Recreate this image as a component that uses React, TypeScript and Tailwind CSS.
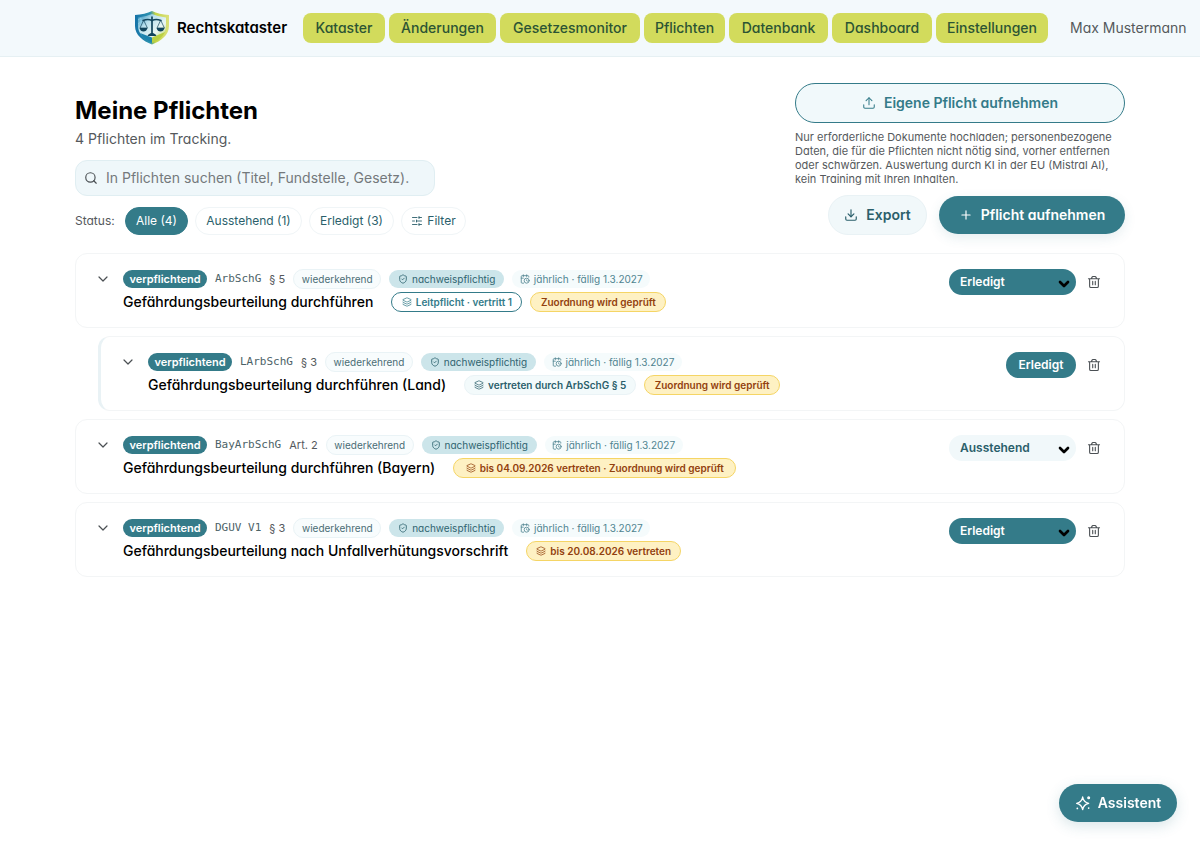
import type { ReactNode } from "react";
import clsx from "clsx";
import {
  CalendarClock,
  ChevronDown,
  Download,
  Layers,
  Plus,
  Search,
  ShieldCheck,
  Upload,
} from "lucide-react";

type Duty = {
  id: string;
  law: string;
  section: string;
  title: string;
  status: "Erledigt" | "Ausstehend";
  child?: boolean;
  tags: ReactNode;
};

const navItems = [
  { label: "Kataster", width: "w-[82px]" },
  { label: "Änderungen", width: "w-[107px]" },
  { label: "Gesetzesmonitor", width: "w-[140px]" },
  { label: "Pflichten", width: "w-[81px]" },
  { label: "Datenbank", width: "w-[99px]" },
  { label: "Dashboard", width: "w-[100px]" },
  { label: "Einstellungen", width: "w-[112px]" },
];

function Logo() {
  return (
    <svg viewBox="0 0 36 36" className="size-9 shrink-0" aria-hidden="true">
      <defs>
        <linearGradient id="rim" x1="0" y1="0" x2="1" y2="0">
          <stop offset="0" stopColor="#1573a8" />
          <stop offset=".45" stopColor="#2d93ae" />
          <stop offset=".6" stopColor="#c3d548" />
          <stop offset="1" stopColor="#dbe17c" />
        </linearGradient>
        <linearGradient id="field" x1="0" y1="0" x2="1" y2="1">
          <stop offset="0" stopColor="#2488b5" />
          <stop offset=".32" stopColor="#b9e1ee" />
          <stop offset=".65" stopColor="#eaf6f3" />
          <stop offset="1" stopColor="#b4cf4a" />
        </linearGradient>
      </defs>
      <path d="M18 1 Q25 4.500 35 5 V16 C35 25 27 31 18 34.500 C9 31 1 25 1 16 V5 Q11 4.500 18 1Z" fill="url(#rim)" />
      <path d="M18 4 Q25 7 32 7.500 V16 C32 23.500 26 28.500 18 31.500 C10 28.500 4 23.500 4 16 V7.500 Q11 7 18 4Z" fill="url(#field)" />
      <path d="M6 23 C9 28 13 30.500 18 33 V27.500Z" fill="#1c83ad" />
      <path d="M18 27.500 L31 22 C28 28 23 31 18 33Z" fill="#b9d043" />
      <path d="M4 10 l3-2 M4 14 l4-3 M7 8 v6" stroke="#8fd0ea" strokeWidth=".8" />
      <g fill="none" stroke="#12455c" strokeLinecap="round" strokeLinejoin="round">
        <path d="M18 7v17" strokeWidth="1.700" />
        <path d="M9 10.500 Q14 8.500 18 10.500 Q22 8.500 27 10.500" strokeWidth="1.400" />
        <path d="M9.500 10.500 6 18h7z M26.500 10.500 23 18h7z" strokeWidth=".7" />
      </g>
      <path d="M5.500 18h8q-1 3.500-4 3.500t-4-3.500z M22.500 18h8q-1 3.500-4 3.500t-4-3.500z M13.500 26q.5-2 3.500-3h2q3 1 3.500 3z" fill="#12455c" />
    </svg>
  );
}

function TrashIcon() {
  return (
    <svg viewBox="0 0 24 24" className="size-[14px]" fill="none" stroke="currentColor" strokeWidth="1.900" strokeLinecap="round" strokeLinejoin="round" aria-hidden="true">
      <path d="M2.500 6.500h19M4.500 6.500v12.800a2.200 2.200 0 0 0 2.200 2.200h10.600a2.200 2.200 0 0 0 2.200-2.200V6.500M7.500 6.500l1-2.700A2 2 0 0 1 10.300 2.500h3.400a2 2 0 0 1 1.800 1.300l1 2.700M9.800 11v5.500M14.200 11v5.500" />
    </svg>
  );
}

function SlidersIcon() {
  return (
    <svg viewBox="0 0 24 24" className="size-3" fill="none" stroke="currentColor" strokeWidth="1.800" strokeLinecap="round" aria-hidden="true">
      <path d="M3 5h9M16 5h5M16 3v4M3 12h4M11 12h10M11 10v4M3 19h9M16 19h5M16 17v4" />
    </svg>
  );
}

function SparkIcon() {
  return (
    <svg viewBox="0 0 24 24" className="size-4" fill="none" stroke="currentColor" strokeWidth="2" strokeLinecap="round" strokeLinejoin="round" aria-hidden="true">
      <path d="M11.500 3c1 6 3.300 8.300 9 9.500-5.700 1.200-8 3.500-9 9.500-1-6-3.300-8.300-9-9.500 5.700-1.200 8-3.500 9-9.500z" />
      <circle cx="20.500" cy="4" r="1.300" />
      <path d="M20.500 19.500v.1M3.500 20v.1" strokeWidth="2.600" />
    </svg>
  );
}

const chip = "flex items-center justify-center gap-1 rounded-full whitespace-nowrap";

function AmberTag({ width, icon, children }: { width: string; icon?: boolean; children: ReactNode }) {
  return (
    <span className={clsx(chip, width, "h-5 border border-[#f5d565] bg-[#fef1c3] text-[10px] font-semibold text-[#92400e]")}>
      {icon && <Layers className="size-[10px]" strokeWidth={1.8} />}
      {children}
    </span>
  );
}

const duties: Duty[] = [
  {
    id: "arbschg",
    law: "ArbSchG",
    section: "§ 5",
    title: "Gefährdungsbeurteilung durchführen",
    status: "Erledigt",
    tags: (
      <>
        <span className={clsx(chip, "h-5 w-[131px] border border-[#347b89] bg-white text-[10px] font-semibold text-[#347b89]")}>
          <Layers className="size-[10px]" strokeWidth={1.8} />
          Leitpflicht · vertritt 1
        </span>
        <AmberTag width="w-[136px]">Zuordnung wird geprüft</AmberTag>
      </>
    ),
  },
  {
    id: "larbschg",
    law: "LArbSchG",
    section: "§ 3",
    title: "Gefährdungsbeurteilung durchführen (Land)",
    status: "Erledigt",
    child: true,
    tags: (
      <>
        <span className={clsx(chip, "h-5 w-[172px] border border-[#eaf3f6] bg-[#f3fafb] text-[10px] font-semibold text-[#2b5f6b]")}>
          <Layers className="size-[10px]" strokeWidth={1.8} />
          vertreten durch ArbSchG § 5
        </span>
        <AmberTag width="w-[136px]">Zuordnung wird geprüft</AmberTag>
      </>
    ),
  },
  {
    id: "bayarbschg",
    law: "BayArbSchG",
    section: "Art. 2",
    title: "Gefährdungsbeurteilung durchführen (Bayern)",
    status: "Ausstehend",
    tags: (
      <AmberTag width="w-[283px]" icon>
        bis 04.09.2026 vertreten · Zuordnung wird geprüft
      </AmberTag>
    ),
  },
  {
    id: "dguv",
    law: "DGUV V1",
    section: "§ 3",
    title: "Gefährdungsbeurteilung nach Unfallverhütungsvorschrift",
    status: "Erledigt",
    tags: (
      <AmberTag width="w-[155px]" icon>
        bis 20.08.2026 vertreten
      </AmberTag>
    ),
  },
];

function DutyCard({ duty }: { duty: Duty }) {
  return (
    <li
      className={clsx(
        "flex items-start gap-[9px] rounded-xl border border-[#f3f5f6] bg-white px-4 py-[15px]",
        duty.child && "ml-[23px] border-l-[3px] border-l-[#e9f2f5]",
      )}
    >
      <button type="button" aria-label="Details anzeigen" className="flex h-5 w-[22px] shrink-0 items-center justify-center text-[#4b5054]">
        <ChevronDown className="size-4" strokeWidth={1.8} />
      </button>
      <div className="flex min-w-0 flex-1 flex-col gap-[3px]">
        <div className="flex h-5 items-center gap-2 text-[10px]">
          <span className={clsx(chip, "h-[18px] w-[84px] bg-[#347b89] text-[11px] font-semibold text-white")}>verpflichtend</span>
          <span className="font-['DejaVu_Sans_Mono',monospace] text-[11px] text-[#4c6267]">{duty.law}</span>
          <span className="text-[11px] text-[#55595c]">{duty.section}</span>
          <span className={clsx(chip, "h-5 w-[88px] border border-[#eaf3f6] bg-[#f8fcfd] text-[#4a6d75]")}>wiederkehrend</span>
          <span className={clsx(chip, "h-[18px] w-[115px] bg-[#cce5ea] text-[#2f6470]")}>
            <ShieldCheck className="size-[10px]" strokeWidth={2} />
            nachweispflichtig
          </span>
          <span className={clsx(chip, "h-[18px] w-[138px] bg-[#f5fbfc] text-[#4f8490]")}>
            <CalendarClock className="size-[10px]" strokeWidth={2} />
            jährlich · fällig 1.3.2027
          </span>
        </div>
        <div className="flex h-5 items-center gap-2">
          <h2 className="mr-2.5 text-sm font-medium whitespace-nowrap text-black">{duty.title}</h2>
          {duty.tags}
        </div>
      </div>
      <div className="flex items-center gap-1">
        {duty.child ? (
          <span className="flex h-[26px] w-[70px] items-center justify-center rounded-full bg-[#347b89] text-xs font-semibold text-white">
            {duty.status}
          </span>
        ) : (
          <div className="relative">
            <select
              aria-label={`Status: ${duty.title}`}
              defaultValue={duty.status}
              className={clsx(
                "block h-[26px] w-[127px] appearance-none rounded-full pr-7 pl-[11px] text-xs font-semibold",
                duty.status === "Erledigt" ? "bg-[#347b89] text-white" : "bg-[#f1f8fa] text-[#2b5f6b]",
              )}
            >
              <option>Ausstehend</option>
              <option>Erledigt</option>
            </select>
            <ChevronDown className="pointer-events-none absolute top-[7px] right-1 size-4 text-black" strokeWidth={4} />
          </div>
        )}
        <button type="button" aria-label="Pflicht entfernen" className="flex h-[26px] w-7 items-center justify-center text-[#4b5054]">
          <TrashIcon />
        </button>
      </div>
    </li>
  );
}

const filterChip = "flex h-7 items-center justify-center gap-1 rounded-full border text-xs";

export default function App() {
  return (
    <div className="min-h-screen bg-white font-['Inter',sans-serif] text-black [font-feature-settings:'cv11']">
      <header className="flex h-[57px] items-center justify-end border-b border-[#e6f0f3] bg-[#f3f9fc] px-4">
        <a href="#start" className="mr-3 flex items-center gap-[7px]">
          <Logo />
          <span className="w-[114px] text-[15px] font-semibold whitespace-nowrap">Rechtskataster</span>
        </a>
        <nav className="flex gap-1">
          {navItems.map((item) => (
            <a
              key={item.label}
              href={`#${item.label.toLowerCase()}`}
              className={clsx("flex h-[30px] items-center justify-center rounded-lg bg-[#d2db5c] text-sm font-medium text-[#2c5434]", item.width)}
            >
              {item.label}
            </a>
          ))}
        </nav>
        <span className="ml-[22px] w-[114px] text-sm whitespace-nowrap text-[#55595c]">Max Mustermann</span>
      </header>

      <main className="mx-auto max-w-[1050px] pt-[26px] pb-8">
        <div className="flex items-end justify-between">
          <div className="flex flex-col">
            <h1 className="text-2xl leading-8 font-bold">Meine Pflichten</h1>
            <p className="text-sm leading-6 text-[#55595c]">4 Pflichten im Tracking.</p>
            <label className="mt-[9px] flex h-9 w-[360px] items-center gap-2 rounded-xl border border-[#e0eef2] bg-[#eff7fa] px-2">
              <Search className="size-[14px] shrink-0 text-[#4b5054]" strokeWidth={2} />
              <input
                type="search"
                aria-label="In Pflichten suchen"
                placeholder="In Pflichten suchen (Titel, Fundstelle, Gesetz)."
                className="min-w-0 flex-1 bg-transparent text-sm outline-none placeholder:text-[#74797c]"
              />
            </label>
            <div className="mt-[11px] flex items-center gap-[7px]">
              <span className="w-[43px] text-xs text-[#55595c]">Status:</span>
              <button type="button" className={clsx(filterChip, "w-[63px] border-[#347b89] bg-[#347b89] text-white")}>Alle (4)</button>
              <button type="button" className={clsx(filterChip, "w-[107px] border-[#f0f5f7] bg-white text-[#2b5f6b]")}>Ausstehend (1)</button>
              <button type="button" className={clsx(filterChip, "w-[85px] border-[#f0f5f7] bg-white text-[#2b5f6b]")}>Erledigt (3)</button>
              <button type="button" className={clsx(filterChip, "w-[65px] border-[#f0f5f7] bg-white text-[#2b5f6b]")}>
                <SlidersIcon />
                Filter
              </button>
            </div>
          </div>

          <div className="flex w-[330px] flex-col">
            <button type="button" className="flex h-10 items-center justify-center gap-2 rounded-full border border-[#347b89] bg-[#f1f9fb] text-sm font-semibold text-[#347b89]">
              <Upload className="size-[14px]" strokeWidth={1.8} />
              Eigene Pflicht aufnehmen
            </button>
            <p className="mt-[7px] text-[11px] leading-[14px] text-[#55595c]">
              Nur erforderliche Dokumente hochladen; personenbezogene Daten, die für die Pflichten nicht nötig sind, vorher entfernen oder schwärzen. Auswertung durch KI in der EU (Mistral AI), kein Training mit Ihren Inhalten.
            </p>
            <div className="mt-[9px] flex items-center justify-end gap-3">
              <button type="button" className="flex h-10 w-[99px] items-center justify-center gap-2 rounded-full border border-[#e9f2f5] bg-[#f1f8fa] text-sm font-semibold text-[#2b5f6b]">
                <Download className="size-[14px]" strokeWidth={2} />
                Export
              </button>
              <button type="button" className="flex h-[38px] w-[186px] items-center justify-center gap-2 rounded-full bg-[#347b89] text-sm font-semibold text-white shadow-[0_4px_12px_#347b8920]">
                <Plus className="size-[14px]" strokeWidth={2} />
                Pflicht aufnehmen
              </button>
            </div>
          </div>
        </div>

        <ul className="mt-[18px] flex flex-col gap-2">
          {duties.map((duty) => (
            <DutyCard key={duty.id} duty={duty} />
          ))}
        </ul>
      </main>

      <button type="button" className="fixed right-[23px] bottom-[22px] flex h-[38px] w-[118px] items-center justify-center gap-[7px] rounded-full bg-[#347b89] text-sm font-semibold text-white shadow-[0_4px_14px_#347b8930]">
        <SparkIcon />
        Assistent
      </button>
    </div>
  );
}
